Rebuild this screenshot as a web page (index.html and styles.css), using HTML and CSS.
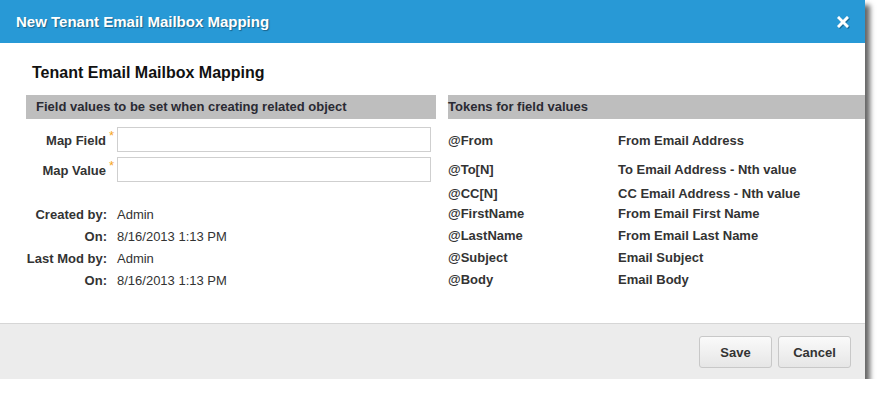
FILE: index.html
```html
<!DOCTYPE html>
<html lang="en">

<head>
	<meta charset="UTF-8">
	<meta name="viewport" content="width=device-width, initial-scale=1.0">
	<title>New Tenant Email Mailbox Mapping</title>
	<link rel="stylesheet" href="styles.css">
</head>

<body>
	<div class="dialog">

		<div class="dialog-header">
			<span class="dialog-title">New Tenant Email Mailbox Mapping</span>
			<a class="dialog-close" title="Close">
				<svg width="12" height="12" viewBox="0 0 12 12">
					<path d="M2 2 L10 10 M10 2 L2 10" stroke="#fff" stroke-width="3" stroke-linecap="square" />
				</svg>
			</a>
		</div>

		<div class="dialog-body">
			<h2 class="form-title">Tenant Email Mailbox Mapping</h2>

			<div class="columns">
				<!-- left: the fields -->
				<div class="column column-left">
					<div class="bar bar-left">Field values to be set when creating related object</div>

					<div class="fields">
						<div class="field-row">
							<label class="field-label">Map Field<span class="req">*</span></label>
							<input type="text" class="field-input">
						</div>
						<div class="field-row">
							<label class="field-label">Map Value<span class="req">*</span></label>
							<input type="text" class="field-input">
						</div>
					</div>

					<div class="meta">
						<div class="meta-row"><span class="meta-label">Created by:</span><span>Admin</span></div>
						<div class="meta-row"><span class="meta-label">On:</span><span>8/16/2013 1:13 PM</span></div>
						<div class="meta-row"><span class="meta-label">Last Mod by:</span><span>Admin</span></div>
						<div class="meta-row"><span class="meta-label">On:</span><span>8/16/2013 1:13 PM</span></div>
					</div>
				</div>

				<!-- right: token list -->
				<div class="column column-right">
					<div class="bar">Tokens for field values</div>
					<div class="tokens">
						<div class="token token-tall"><span class="token-name">@From</span><span>From Email Address</span></div>
						<div class="token token-mid"><span class="token-name">@To[N]</span><span>To Email Address - Nth value</span></div>
						<div class="token token-short"><span class="token-name">@CC[N]</span><span>CC Email Address - Nth value</span></div>
						<div class="token"><span class="token-name">@FirstName</span><span>From Email First Name</span></div>
						<div class="token"><span class="token-name">@LastName</span><span>From Email Last Name</span></div>
						<div class="token"><span class="token-name">@Subject</span><span>Email Subject</span></div>
						<div class="token"><span class="token-name">@Body</span><span>Email Body</span></div>
					</div>
				</div>
			</div>
		</div>

		<div class="dialog-footer">
			<button class="btn">Save</button>
			<button class="btn">Cancel</button>
		</div>

	</div>
</body>

</html>
```

FILE: styles.css
```css
body {
	margin: 0;
	background-color: #fff;
	font-family: "Liberation Sans", Arial, sans-serif;
	font-size: 13px;
	color: #333;
}

.dialog {
	width: 865px;
	background-color: #fff;
	box-shadow: 5px 5px 5px rgba(0, 0, 0, 0.6);
}

.dialog-header {
	height: 43px;
	background-color: #2899d6;
	display: flex;
	align-items: center;
	justify-content: space-between;
	padding: 0 16px;
	box-sizing: border-box;
}

.dialog-title {
	color: #fff;
	font-size: 15px;
	font-weight: bold;
	text-shadow: 1px 1px 1px rgba(0, 0, 0, 0.35);
}

.dialog-close {
	display: flex;
	filter: drop-shadow(1px 1px 0 rgba(0, 0, 0, 0.3));
}

.dialog-body {
	height: 280px;
	padding: 20px 0 0 26px;
	box-sizing: border-box;
}

.form-title {
	margin: 0 0 12px 6px;
	font-size: 16px;
	line-height: 20px;
	font-weight: bold;
	color: #111;
}

.columns {
	display: flex;
	gap: 12px;
}

.column-left {
	width: 410px;
}

.column-right {
	flex: 1;
}

.bar {
	height: 24px;
	line-height: 24px;
	background-color: #bebebe;
	font-weight: bold;
	color: #2a2a33;
}

.bar-left {
	padding-left: 10px;
}

.fields {
	display: flex;
	flex-direction: column;
	gap: 5px;
	padding-top: 8px;
}

.field-row {
	display: flex;
	align-items: center;
}

.field-label {
	width: 91px;
	text-align: right;
	padding-right: 3px;
	box-sizing: border-box;
	font-weight: bold;
}

.req {
	display: inline-block;
	width: 8px;
	color: #f5a623;
	font-size: 13px;
	line-height: 10px;
	vertical-align: 5px;
	font-weight: normal;
	text-align: right;
}

.field-input {
	width: 314px;
	height: 25px;
	margin: 0;
	border: 1px solid #cfcfcf;
	box-sizing: border-box;
	padding: 2px 4px;
	font-family: inherit;
}

.meta {
	margin-top: 22px;
}

.meta-row {
	display: flex;
	line-height: 22px;
}

.meta-label {
	width: 81px;
	margin-right: 10px;
	text-align: right;
	font-weight: bold;
}

.tokens {
	padding-top: 11px;
}

.token {
	display: flex;
	line-height: 22px;
	font-weight: bold;
}

.token-tall {
	padding-bottom: 7px;
}

.token-mid {
	padding-bottom: 2px;
}

.token-short {
	line-height: 19px;
	padding-top: 1px;
}

.token-name {
	width: 170px;
}

.dialog-footer {
	height: 56px;
	border-top: 1px solid #d6d6d6;
	background-color: #ececec;
	box-sizing: border-box;
	display: flex;
	justify-content: flex-end;
	align-items: flex-start;
	gap: 6px;
	padding: 12px 14px 0 0;
}

.btn {
	width: 73px;
	height: 32px;
	border: 1px solid #c8c8c8;
	border-radius: 3px;
	background: linear-gradient(#fafafa, #e6e6e6);
	font-family: inherit;
	font-size: 13px;
	font-weight: bold;
	color: #333;
	padding: 0;
}
```
